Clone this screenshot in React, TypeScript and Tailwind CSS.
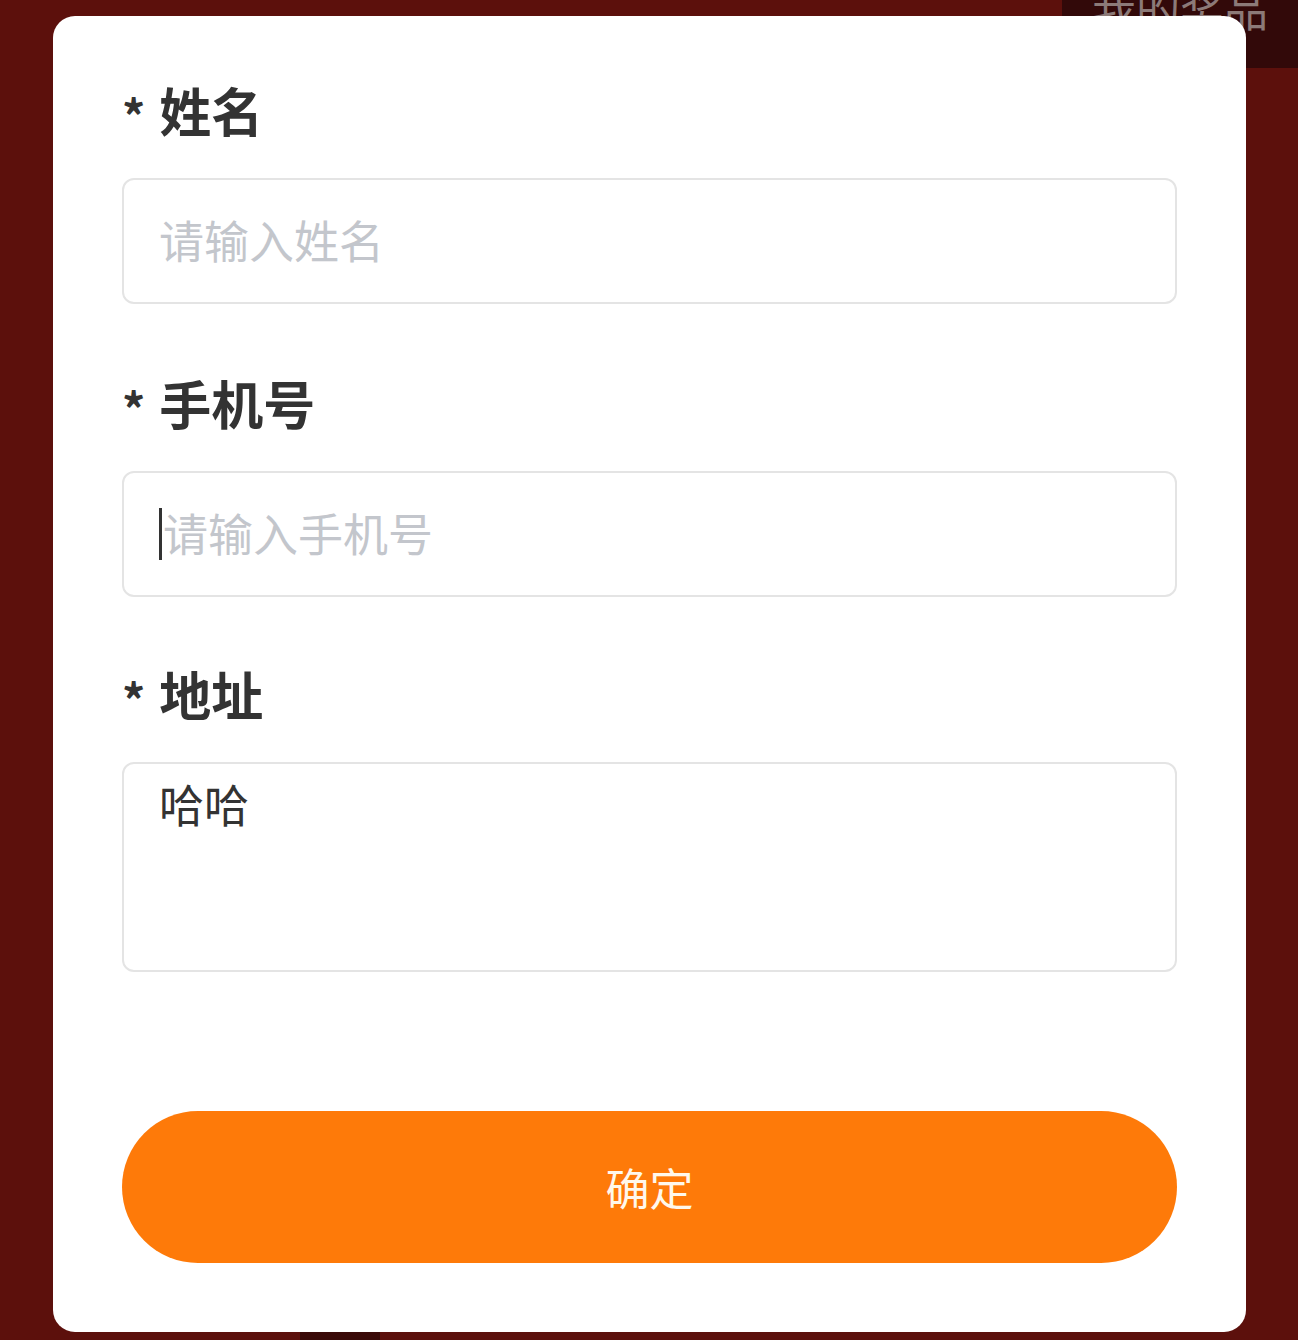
const font = { fontFamily: '"Noto Sans CJK SC", "Noto Sans", sans-serif' }

function Label({ text }: { text: string }) {
  return (
    <div className="flex h-[60px] items-center text-[#333333]">
      <span className="mr-[14px] mt-[8px] text-[46px] font-bold leading-none">*</span>
      <span className="text-[52px] font-semibold leading-none">{text}</span>
    </div>
  )
}

function Field({ placeholder, caret }: { placeholder: string; caret?: boolean }) {
  return (
    <div className="mt-[38px] flex h-[126px] items-center rounded-[12px] border-2 border-[#e4e4e4] px-[35px]">
      {caret && <span className="mr-[1px] inline-block h-[52px] w-[3px] bg-[#333333]" />}
      <span className="mt-[-4px] text-[45px] leading-none text-[#c3c6cc]">{placeholder}</span>
    </div>
  )
}

export default function App() {
  return (
    <div className="relative min-h-[1340px] w-full overflow-hidden bg-[#5c100c]" style={font}>
      <div className="absolute right-0 top-0 flex h-[68px] w-[236px] items-start justify-center bg-[#320909]">
        <span className="-mt-[14px] text-[44px] leading-none text-[#8c7a78]">我的奖品</span>
      </div>
      <div className="absolute bottom-0 left-[300px] h-[10px] w-[80px] bg-[#3a0a08]" />

      <div className="relative ml-[53px] mt-[16px] w-[1193px] rounded-[22px] bg-white px-[69px] pb-[69px] pt-[64px]">
        <Label text="姓名" />
        <Field placeholder="请输入姓名" />

        <div className="mt-[69px]">
          <Label text="手机号" />
        </div>
        <Field placeholder="请输入手机号" caret />

        <div className="mt-[67px]">
          <Label text="地址" />
        </div>
        <div className="mt-[38px] h-[210px] rounded-[12px] border-2 border-[#e4e4e4] px-[35px] pt-[17px]">
          <span className="text-[45px] leading-none text-[#333333]">哈哈</span>
        </div>

        <button className="mt-[139px] flex h-[152px] w-full items-center justify-center rounded-full bg-[#fe7a09] text-[44px] text-[#fff8ec]">
          确定
        </button>
      </div>
    </div>
  )
}
